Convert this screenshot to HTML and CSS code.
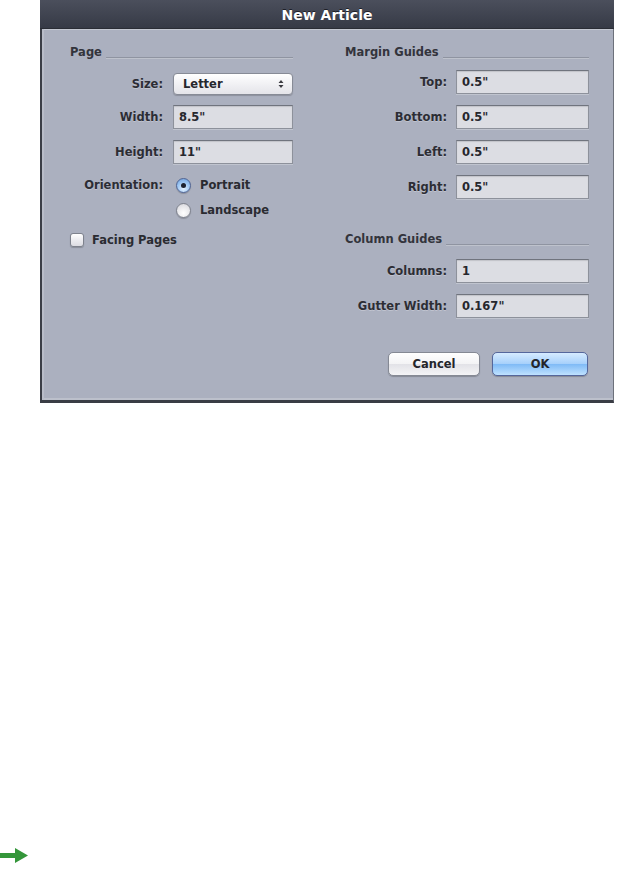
FILE: index.html
```html
<!DOCTYPE html>
<html>
<head>
<meta charset="utf-8">
<title>New Article</title>
<link rel="stylesheet" href="styles.css">
</head>
<body>
<div class="dialog">
  <div class="titlebar">New Article</div>
  <div class="dlg-body">
    <div class="col col-left">
      <div class="heading"><span>Page</span></div>
      <div class="row r-size"><span class="lbl">Size:</span>
        <div class="popup"><span>Letter</span>
          <svg class="updown" width="6" height="10" viewBox="0 0 6 10"><path d="M0.5 4 L3 1 L5.5 4 Z M0.5 6 L3 9 L5.5 6 Z" fill="#3a3a40"/></svg>
        </div>
      </div>
      <div class="row r-gap10"><span class="lbl">Width:</span><div class="field">8.5"</div></div>
      <div class="row r-gap11"><span class="lbl">Height:</span><div class="field">11"</div></div>
      <div class="row r-radio1"><span class="lbl">Orientation:</span><div class="opt"><span class="radio on"></span>Portrait</div></div>
      <div class="row r-radio2"><span class="lbl"></span><div class="opt"><span class="radio"></span>Landscape</div></div>
      <div class="check-row"><span class="checkbox"></span>Facing Pages</div>
    </div>
    <div class="col col-right">
      <div class="heading"><span>Margin Guides</span></div>
      <div class="row r-first"><span class="lbl">Top:</span><div class="field">0.5"</div></div>
      <div class="row r-gap11"><span class="lbl">Bottom:</span><div class="field">0.5"</div></div>
      <div class="row r-gap11"><span class="lbl">Left:</span><div class="field">0.5"</div></div>
      <div class="row r-gap11"><span class="lbl">Right:</span><div class="field">0.5"</div></div>
      <div class="heading h-second"><span>Column Guides</span></div>
      <div class="row r-gap13"><span class="lbl">Columns:</span><div class="field">1</div></div>
      <div class="row r-gap11"><span class="lbl">Gutter Width:</span><div class="field">0.167"</div></div>
      <div class="buttons">
        <div class="btn cancel">Cancel</div>
        <div class="btn ok">OK</div>
      </div>
    </div>
  </div>
</div>
<div class="next-arrow">
  <svg width="28" height="15" viewBox="0 0 28 15"><path d="M0 5 H15 V0 L28 7.5 L15 15 V10 H0 Z" fill="#34963a"/></svg>
</div>
</body>
</html>
```

FILE: styles.css
```css
html, body {
  margin: 0;
  padding: 0;
  background: #ffffff;
}

body {
  font-family: "DejaVu Sans", "Liberation Sans", sans-serif;
  font-size: 11.5px;
  font-weight: bold;
  color: #2a2b31;
}

.dialog {
  margin-left: 40px;
  width: 574px;
  height: 403px;
  display: flex;
  flex-direction: column;
  box-sizing: border-box;
  border-left: 2px solid #3b3e47;
  border-right: 1px solid #6d717b;
  border-bottom: 3px solid #3a3d45;
  background: #abb0bf;
}

.titlebar {
  height: 29px;
  flex: none;
  margin-left: -2px;
  margin-right: -1px;
  background: linear-gradient(#4b4f5c, #363a46);
  border-bottom: 1px solid #2a2d35;
  box-sizing: border-box;
  color: #ffffff;
  font-size: 14px;
  font-weight: bold;
  text-align: center;
  line-height: 30px;
  text-shadow: 0 -1px 0 #1e2028;
}

.dlg-body {
  flex: 1;
  display: flex;
  gap: 50px;
  padding: 16px 0 0 26px;
  box-shadow: inset 2px 0 0 #b9bdc9, inset 0 1px 0 #c3c7d1, inset 0 -2px 0 #bcc0cb;
}

.col {
  display: flex;
  flex-direction: column;
}

.col-left {
  width: 225px;
}

.col-right {
  width: 246px;
}

.heading {
  height: 14px;
  line-height: 14px;
  display: flex;
  align-items: flex-end;
  padding-left: 2px;
  color: #33343c;
}

.heading span {
  align-self: center;
}

.heading::after {
  content: "";
  flex: 1;
  height: 0;
  border-top: 1px solid #8f94a1;
  border-bottom: 1px solid #bec2cc;
  margin-left: 4px;
  margin-bottom: 0;
}

.h-second {
  margin-top: 33px;
}

.row {
  display: grid;
  align-items: center;
  column-gap: 10px;
}

.col-left .row {
  grid-template-columns: 95px 120px;
}

.col-right .row {
  grid-template-columns: 104px 133px;
  column-gap: 9px;
}

.lbl {
  text-align: right;
  color: #2c2d34;
  text-shadow: 0 1px 0 rgba(255, 255, 255, 0.25);
}

.r-size { margin-top: 14px; }
.r-first { margin-top: 11px; }
.r-gap10 { margin-top: 10px; }
.r-gap11 { margin-top: 11px; }
.r-gap13 { margin-top: 13px; }
.r-radio1 { margin-top: 12px; height: 18px; }
.r-radio2 { margin-top: 7px; height: 18px; }

.field {
  height: 24px;
  box-sizing: border-box;
  background: #dcdde3;
  border: 1px solid #8d919b;
  border-top-color: #70747e;
  box-shadow: inset 0 1px 1px rgba(0, 0, 0, 0.12), 0 1px 0 rgba(255, 255, 255, 0.25);
  padding-left: 5px;
  line-height: 22px;
  color: #26272d;
}

.popup {
  height: 22px;
  box-sizing: border-box;
  border: 1px solid #878b96;
  border-radius: 4px;
  background: linear-gradient(#ffffff, #f1f1f4 50%, #e4e4e9);
  box-shadow: 0 1px 1px rgba(0, 0, 0, 0.18);
  display: flex;
  align-items: center;
  justify-content: space-between;
  padding: 0 8px 0 9px;
  color: #26272d;
}

.updown {
  display: block;
}

.opt {
  display: flex;
  align-items: center;
  gap: 9px;
  padding-left: 3px;
}

.radio {
  width: 15px;
  height: 15px;
  box-sizing: border-box;
  border-radius: 50%;
  border: 1px solid #7e828d;
  background: radial-gradient(circle at 50% 70%, #ffffff, #e6e6ea 60%, #d0d0d6);
  box-shadow: 0 1px 1px rgba(0, 0, 0, 0.2);
  display: flex;
  align-items: center;
  justify-content: center;
}

.radio.on {
  border-color: #4f6494;
  background: radial-gradient(circle at 50% 75%, #e3f1ff, #9ac4f2 55%, #6a9bd8);
}

.radio.on::after {
  content: "";
  width: 5px;
  height: 5px;
  border-radius: 50%;
  background: #1d2230;
}

.check-row {
  margin-top: 12px;
  height: 17px;
  display: flex;
  align-items: center;
  gap: 8px;
  padding-left: 2px;
}

.checkbox {
  width: 14px;
  height: 14px;
  box-sizing: border-box;
  border: 1px solid #7e828d;
  border-radius: 3px;
  background: linear-gradient(#ffffff, #ececf0 50%, #dcdce2);
  box-shadow: 0 1px 1px rgba(0, 0, 0, 0.2);
}

.buttons {
  margin-top: 34px;
  display: flex;
  justify-content: flex-end;
  gap: 12px;
  padding-right: 1px;
}

.btn {
  height: 24px;
  box-sizing: border-box;
  border-radius: 5px;
  text-align: center;
  line-height: 22px;
  color: #24252b;
  box-shadow: 0 1px 1px rgba(0, 0, 0, 0.22);
}

.cancel {
  width: 92px;
  border: 1px solid #858994;
  background: linear-gradient(#ffffff, #f3f3f5 50%, #e2e2e7 51%, #f4f4f6);
}

.ok {
  width: 96px;
  border: 1px solid #55679c;
  background: linear-gradient(#d6ebff, #a6d0fb 50%, #7fbaf6 51%, #bfe2ff);
}

.next-arrow {
  margin-top: 445px;
  height: 15px;
}

.next-arrow svg {
  display: block;
}
```
